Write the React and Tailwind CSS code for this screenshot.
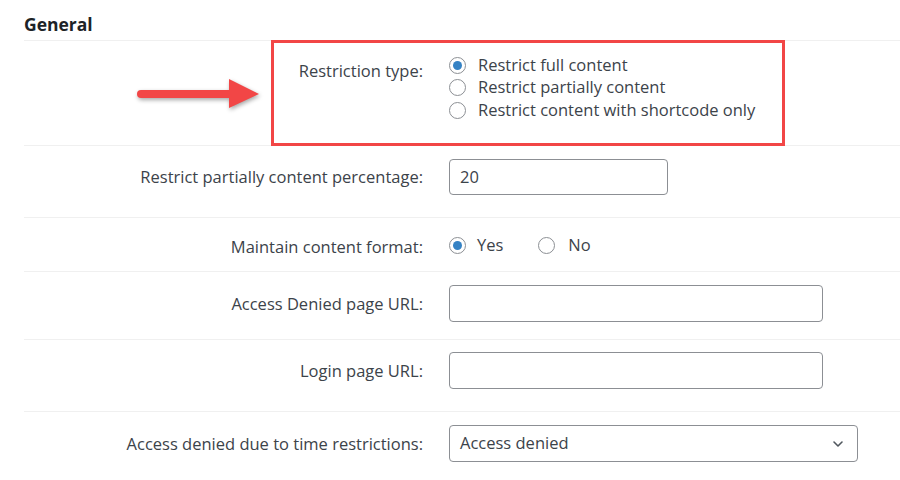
import React from "react";

const Radio = ({ checked }) => (
    <span className="inline-flex items-center justify-center w-[17px] h-[17px] rounded-full border border-[#8c8f94] bg-white shrink-0">
        {checked && <span className="w-[9px] h-[9px] rounded-full bg-[#3582c4]"></span>}
    </span>
)

const Label = ({ children, className = "" }) => (
    <div className={"w-[399px] shrink-0 text-right leading-[22px] " + className}>{children}</div>
)

const App = () => {
    return (
        <div className="relative w-[900px] h-[480px] bg-white overflow-hidden text-[#3c434a] text-[16.5px]" style={{ fontFamily: '"Open Sans", "Noto Sans", sans-serif' }}>
            <h2 className="pl-6 pt-[12px] h-[40px] text-[17.5px] font-bold text-[#1d2327] leading-[24px]">General</h2>
            <div className="ml-6 border-t border-[#f0f0f0]">
                {/* restriction type */}
                <div className="flex h-[105px] border-b border-[#f0f0f0]">
                    <Label className="pt-[19px]">Restriction type:</Label>
                    <div className="pl-[26px] pt-[13px] flex flex-col">
                        <label className="flex items-center gap-3 h-[22.5px]"><Radio checked />Restrict full content</label>
                        <label className="flex items-center gap-3 h-[22.5px]"><Radio />Restrict partially content</label>
                        <label className="flex items-center gap-3 h-[22.5px]"><Radio />Restrict content with shortcode only</label>
                    </div>
                </div>

                <div className="h-[72px] pt-[13px] border-b border-[#f0f0f0]">
                    <div className="flex items-center h-[36px]">
                        <Label>Restrict partially content percentage:</Label>
                        <div className="ml-[26px] w-[219px] h-[36px] border border-[#8c8f94] rounded-[4px] flex items-center px-[10px]">20</div>
                    </div>
                </div>

                <div className="h-[54px] pt-[9px] border-b border-[#f0f0f0]">
                    <div className="flex items-center h-[36px]">
                        <Label className="pt-[4px]">Maintain content format:</Label>
                        <div className="ml-[26px] flex items-center">
                            <label className="flex items-center gap-[11px]"><Radio checked />Yes</label>
                            <label className="flex items-center gap-[13px] ml-[35px]"><Radio />No</label>
                        </div>
                    </div>
                </div>

                <div className="h-[68px] pt-[13px] border-b border-[#f0f0f0]">
                    <div className="flex items-center h-[37px]">
                        <Label>Access Denied page URL:</Label>
                        <div className="ml-[26px] w-[374px] h-[37px] border border-[#8c8f94] rounded-[4px]"></div>
                    </div>
                </div>

                <div className="h-[72px] pt-[12px] border-b border-[#f0f0f0]">
                    <div className="flex items-center h-[37px]">
                        <Label>Login page URL:</Label>
                        <div className="ml-[26px] w-[374px] h-[37px] border border-[#8c8f94] rounded-[4px]"></div>
                    </div>
                </div>

                <div className="h-[70px] pt-[13px]">
                    <div className="flex items-center h-[37px]">
                        <Label>Access denied due to time restrictions:</Label>
                        <div className="ml-[26px] w-[409px] h-[37px] border border-[#8c8f94] rounded-[4px] flex items-center justify-between pl-[10px] pr-[12px]">
                            <span>Access denied</span>
                            <svg width="14" height="14" viewBox="0 0 14 14" fill="none">
                                <path d="M3 5l4 4 4-4" stroke="#50575e" strokeWidth="1.6" strokeLinecap="round" strokeLinejoin="round" />
                            </svg>
                        </div>
                    </div>
                </div>
            </div>

            {/* annotation */}
            <div className="absolute left-[271px] top-[40px] w-[514px] h-[106px] border-[3px] border-[#f24646]"></div>
            <svg className="absolute left-[133px] top-[76px]" width="130" height="40" viewBox="0 0 130 40" style={{ filter: 'drop-shadow(1px 2px 2px rgba(0,0,0,0.35))' }}>
                <line x1="8" y1="18" x2="98" y2="18" stroke="#f24646" strokeWidth="8" strokeLinecap="round" />
                <polygon points="96,3 126,18 96,32" fill="#f24646" />
            </svg>
        </div>
    )
}
export default App
